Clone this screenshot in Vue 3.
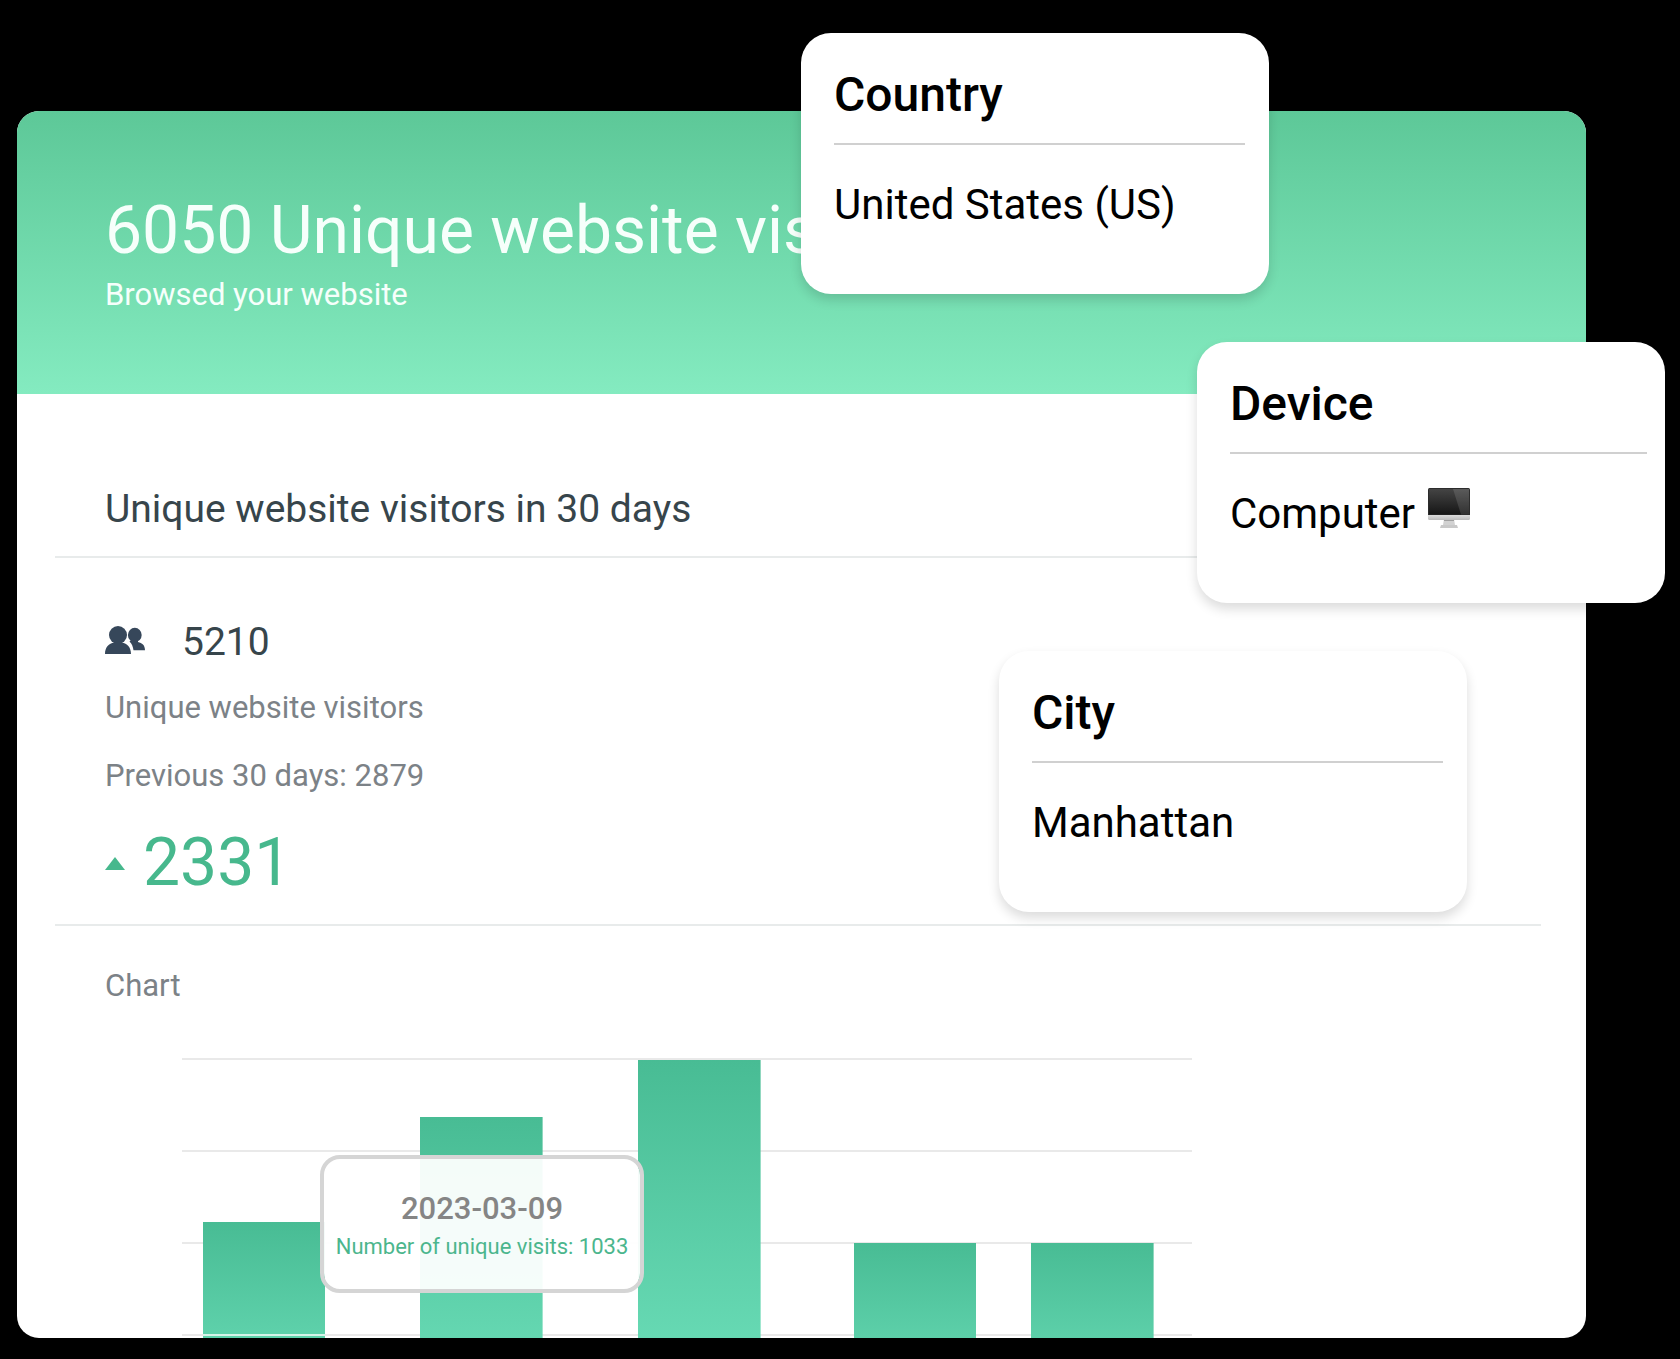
<template>
  <div class="stage">
    <main class="report">
      <header class="report-header">
        <h1>6050 Unique website vis</h1>
        <p>Browsed your website</p>
      </header>

      <section class="block">
        <h2>Unique website visitors in 30 days</h2>
      </section>

      <section class="block summary">
        <div class="total">
          <svg class="users" viewBox="0 0 40 28" aria-hidden="true">
            <ellipse cx="13" cy="9" rx="9" ry="9" />
            <path d="M0 28C0 21 4 17.500 9 16.500L9 14L17 14L17 16.500C22 17.500 26 21 26 28Z" />
            <ellipse cx="29.800" cy="9" rx="6.900" ry="7.200" />
            <path d="M24.500 15.500L27 13H33V16C37 17 40 19 40 24.300H28.500C28 20.500 26.800 17.800 24.500 15.500Z" />
          </svg>
          <span>{{ total }}</span>
        </div>
        <p class="muted">Unique website visitors</p>
        <p class="muted previous">Previous 30 days: {{ previous }}</p>
        <div class="growth">
          <span class="arrow-up"></span>
          <span>{{ total - previous }}</span>
        </div>
      </section>

      <section class="chart">
        <h3 class="muted">Chart</h3>
        <div class="plot">
          <div
            v-for="(bar, i) in bars"
            :key="i"
            class="bar"
            :class="{ crossed: bar.crossed }"
            :style="{ height: bar.height + 'px', marginLeft: bar.gap + '%' }"
          ></div>
          <div class="tooltip">
            <strong>2023-03-09</strong>
            <span>Number of unique visits: 1033</span>
          </div>
        </div>
      </section>
    </main>

    <article v-for="card in cards" :key="card.id" class="info-card" :class="card.id">
      <h2>{{ card.title }}</h2>
      <p>
        {{ card.value }}
        <svg v-if="card.id === 'device'" class="monitor" viewBox="0 0 42 40" aria-hidden="true">
          <defs>
            <linearGradient id="screen" x1="0" y1="0" x2="0" y2="1">
              <stop offset="0" stop-color="#444" />
              <stop offset="1" stop-color="#161616" />
            </linearGradient>
            <linearGradient id="metal" x1="0" y1="0" x2="0" y2="1">
              <stop offset="0" stop-color="#e2e2e2" />
              <stop offset="1" stop-color="#bcbcbc" />
            </linearGradient>
          </defs>
          <path d="M16 31H26L27 37H15Z" fill="#d2d2d2" />
          <path d="M16 31H26V33H16Z" fill="#a0a0a0" />
          <path d="M13 37H29L30 40H12Z" fill="#c9c9c9" />
          <path d="M0 26H42V30.500Q42 32 40.500 32H1.500Q0 32 0 30.500Z" fill="url(#metal)" />
          <path d="M0 27V1.500Q0 0 1.500 0H40.500Q42 0 42 1.500V27Z" fill="#2c2c2c" />
          <rect x="1" y="1" width="40" height="25.500" fill="url(#screen)" />
          <path d="M25 1H41V26.500H33Z" fill="#fff" opacity="0.12" />
        </svg>
      </p>
    </article>
  </div>
</template>

<script setup>
const total = 5210
const previous = 2879

// gap = espacio antes de la barra, en % del ancho del gráfico
const bars = [
  { height: 116, gap: 2.1, crossed: true },
  { height: 221, gap: 9.4 },
  { height: 278, gap: 9.5 },
  { height: 95, gap: 9.2 },
  { height: 95, gap: 5.5 }
]

const cards = [
  { id: 'country', title: 'Country', value: 'United States (US)' },
  { id: 'device', title: 'Device', value: 'Computer' },
  { id: 'city', title: 'City', value: 'Manhattan' }
]
</script>

<style>
body {
  margin: 0;
  background: #000;
}
</style>

<style scoped>
.stage {
  position: relative;
  padding: 111px 94px 21px 17px;
  font-family: Roboto, "Liberation Sans", sans-serif;
}

h1,
h2,
h3,
p {
  margin: 0;
  font-weight: 400;
}

.report {
  background: #fff;
  border-radius: 22px;
  overflow: hidden;
}

.report-header {
  padding: 82px 88px 81px;
  color: #f6fffb;
  background: linear-gradient(#5dc898, #84ebc0);
}

.report-header h1 {
  margin-bottom: 8px;
  font-size: 66px;
  line-height: 76px;
}

.report-header p {
  font-size: 31px;
  line-height: 36px;
}

.block {
  margin: 0 45px 0 38px;
  padding: 91px 50px 23px;
  border-bottom: 2px solid #e8ebeb;
}

.block h2 {
  font-size: 39px;
  line-height: 48px;
  color: #37454b;
}

.summary {
  padding-top: 60px;
}

.total {
  display: flex;
  align-items: center;
  gap: 37px;
  margin-bottom: 24px;
  font-size: 39px;
  line-height: 48px;
  color: #37454b;
}

.users {
  width: 40px;
  height: 28px;
  margin-bottom: 4px;
  fill: #36475a;
}

.muted {
  font-size: 31px;
  line-height: 36px;
  color: #7c8287;
}

.previous {
  margin: 32px 0 31px;
}

.growth {
  display: flex;
  align-items: center;
  gap: 18px;
  font-size: 66px;
  line-height: 76px;
  color: #47b88d;
}

.arrow-up {
  border: 10px solid transparent;
  border-top: 0;
  border-bottom: 13px solid #47b88d;
}

.chart {
  padding: 42px 88px 0;
}

.plot {
  position: relative;
  display: flex;
  align-items: flex-end;
  width: 1010px;
  max-width: 100%;
  height: 280px;
  margin: 54px 0 0 77px;
  background: repeating-linear-gradient(#e9e9e9 0 2px, transparent 2px 92px);
}

.bar {
  display: flex;
  align-items: flex-end;
  width: 12.1%;
  background: linear-gradient(#48bc94, #70e2bd) top / 100% calc(100% + 90px) no-repeat;
}

.crossed::after {
  content: "";
  flex: 1;
  height: 2px;
  margin-bottom: 2px;
  background: #d5f3e8;
}

.tooltip {
  position: absolute;
  top: 97px;
  left: 138px;
  box-sizing: border-box;
  display: flex;
  flex-direction: column;
  align-items: center;
  width: 324px;
  height: 138px;
  padding-top: 32px;
  background: rgba(255, 255, 255, 0.94);
  background-clip: padding-box;
  border: 4px solid #d5d5d5;
  border-radius: 20px;
  white-space: nowrap;
}

.tooltip strong {
  font-size: 31px;
  font-weight: 500;
  line-height: 36px;
  color: #858585;
}

.tooltip span {
  margin-top: 6px;
  font-size: 22px;
  line-height: 28px;
  color: #4bb68d;
}

.info-card {
  position: absolute;
  box-sizing: border-box;
  width: 468px;
  padding: 34px 24px 64px 33px;
  color: #000;
  background: #fff;
  border-radius: 30px;
  box-shadow: 0 6px 12px rgba(0, 0, 0, 0.14);
}

.info-card h2 {
  padding-bottom: 20px;
  border-bottom: 2px solid #d0d0d0;
  font-size: 48px;
  font-weight: 500;
  line-height: 56px;
}

.info-card p {
  margin-top: 35px;
  font-size: 42px;
  line-height: 50px;
}

.country {
  top: 33px;
  right: 411px;
}

.device {
  top: 342px;
  right: 15px;
  padding-right: 18px;
}

.city {
  top: 651px;
  right: 213px;
}

.monitor {
  width: 42px;
  height: 40px;
  margin: -2px 0 0 2px;
}
</style>
